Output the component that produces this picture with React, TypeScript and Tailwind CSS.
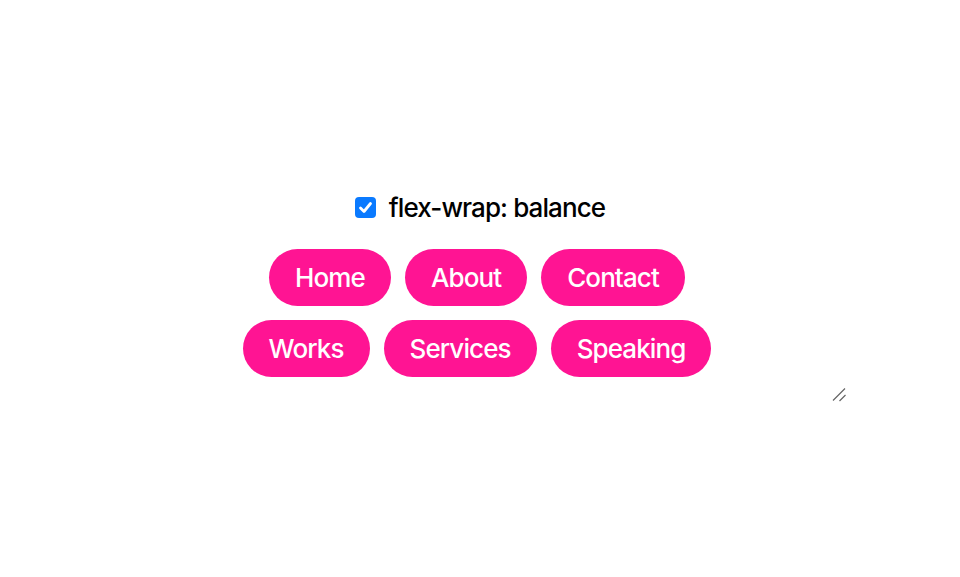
import React, { useState } from 'react';

const rows = [
  ['Home', 'About', 'Contact'],
  ['Works', 'Services', 'Speaking'],
];

export default function App() {
  const [balance, setBalance] = useState(true);

  return (
    <div className="min-h-screen bg-white flex flex-col items-center pt-[192px] font-['Inter',sans-serif] font-[500] tracking-[-0.9px]">
      <label className="flex items-center gap-[13px] text-[26px] leading-[31px] text-black cursor-pointer">
        <input
          type="checkbox"
          checked={balance}
          onChange={(e) => setBalance(e.target.checked)}
          className="sr-only"
        />
        <span
          className={`w-[21px] h-[21px] rounded-[4px] flex items-center justify-center ${
            balance ? 'bg-[#0a7aff]' : 'border border-gray-400 bg-white'
          }`}
        >
          {balance && (
            <svg width="15" height="15" viewBox="0 0 15 15" fill="none">
              <path d="M2.5 8 L6 11.5 L12.5 3.5" stroke="white" strokeWidth="2.8" strokeLinecap="round" strokeLinejoin="round" />
            </svg>
          )}
        </span>
        flex-wrap: balance
      </label>

      <div className="relative mt-[13px] w-[736px] pt-[13px] pb-[27px] pr-[6px] flex flex-col gap-[14px]">
        {rows.map((row, i) => (
          <div key={i} className="flex justify-center gap-[14px]">
            {row.map((item) => (
              <a
                key={item}
                href="#"
                className="rounded-full bg-[#ff1493] text-white text-[26px] leading-[31px] px-[26px] py-[13px]"
              >
                {item}
              </a>
            ))}
          </div>
        ))}
        {/* resize grip */}
        <svg className="absolute right-[1px] bottom-[2px]" width="15" height="15" viewBox="0 0 15 15" fill="none">
          <path d="M1 13.5 L13 1.5 M7.5 14 L13.5 8" stroke="#666" strokeWidth="1.2" />
        </svg>
      </div>
    </div>
  );
}
